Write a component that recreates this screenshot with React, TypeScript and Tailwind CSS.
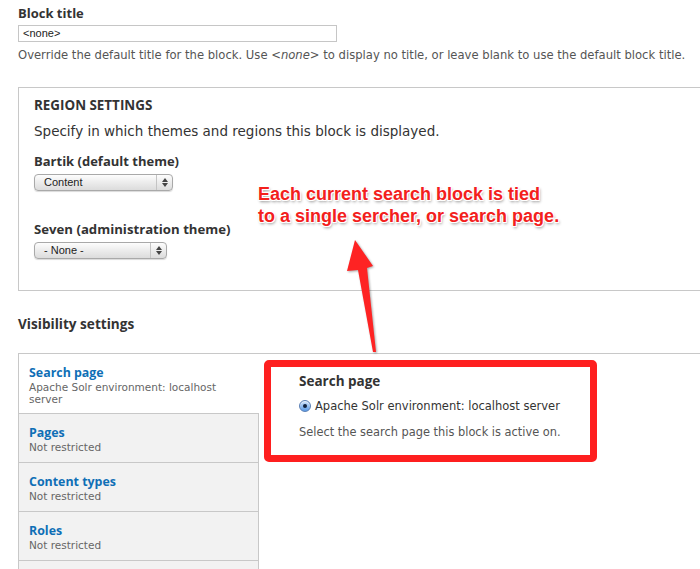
import React from "react";

const font = "font-['Lucida_Grande','DejaVu_Sans',Verdana,sans-serif]";
const bold = "font-['Open_Sans','Lucida_Grande',sans-serif] font-bold";

function AquaSelect({ value, width }: { value: string; width: string }) {
  return (
    <div
      className={`relative flex h-[17px] ${width} items-center rounded-[4px] border border-[#a9a9a9] bg-gradient-to-b from-[#fdfdfd] via-[#ececec] to-[#dcdcdc] shadow-[0_1px_1px_rgba(0,0,0,0.15)]`}
    >
      <span className="flex-1 pl-[9px] font-['Liberation_Sans',Arial,sans-serif] text-[11px] leading-none text-[#222]">
        {value}
      </span>
      <span className="flex h-full w-[16px] flex-col items-center justify-center gap-[1px] border-l border-[#c4c4c4]">
        <svg width="6" height="4" viewBox="0 0 6 4">
          <path d="M3 0 L6 4 L0 4 Z" fill="#444" />
        </svg>
        <svg width="6" height="4" viewBox="0 0 6 4">
          <path d="M0 0 L6 0 L3 4 Z" fill="#444" />
        </svg>
      </span>
    </div>
  );
}

function Tab({
  title,
  summary,
  active,
}: {
  title: string;
  summary: string;
  active?: boolean;
}) {
  return (
    <div
      className={`border-b border-[#c8c8c8] px-[10px] pt-[10px] ${
        active ? "h-[60px] bg-white" : "h-[49px] border-r bg-[#f2f2f2]"
      }`}
    >
      <div className={`${bold} text-[12.4px] leading-[17px] text-[#0f6fb6]`}>{title}</div>
      <div className="pr-[30px] text-[10.5px] leading-[12px] text-[#666]">{summary}</div>
    </div>
  );
}

export default function App() {
  return (
    <div className={`relative h-[569px] w-[700px] overflow-hidden bg-white ${font} text-[#333]`}>
      <div className="pl-[18px] pt-[5px]">
        {/* block title */}
        <label className={`block ${bold} text-[13px] leading-[16px]`}>Block title</label>
        <div className="mt-[4px] flex h-[17px] w-[319px] items-center border border-[#c6c6c6] pl-[4px] font-['Liberation_Sans',Arial,sans-serif] text-[11px] text-[#222]">
          &lt;none&gt;
        </div>
        <p className="mt-[6px] text-[11.6px] leading-[15px] text-[#555]">
          Override the default title for the block. Use <em>&lt;none&gt;</em> to display no title, or
          leave blank to use the default block title.
        </p>

        {/* region settings */}
        <fieldset className="mt-[24px] h-[204px] w-[720px] border border-[#c8c8c8] pl-[15px] pt-[9px]">
          <h2 className={`${bold} text-[13.4px] leading-[16px] uppercase`}>Region settings</h2>
          <p className="mt-[10px] text-[13.5px] leading-[16px]">
            Specify in which themes and regions this block is displayed.
          </p>
          <label className={`mt-[14px] block ${bold} text-[13px] leading-[16px]`}>
            Bartik (default theme)
          </label>
          <div className="mt-[5px]">
            <AquaSelect value="Content" width="w-[139px]" />
          </div>
          <label className={`mt-[30px] block ${bold} text-[13.2px] leading-[16px]`}>
            Seven (administration theme)
          </label>
          <div className="mt-[5px]">
            <AquaSelect value="- None -" width="w-[133px]" />
          </div>
        </fieldset>

        {/* visibility */}
        <h2 className={`mt-[25px] ${bold} text-[13.6px] leading-[16px]`}>Visibility settings</h2>
        <div className="mt-[21px] flex w-[720px] border-t border-l border-[#c8c8c8]">
          <div className="w-[240px] shrink-0">
            <Tab title="Search page" summary="Apache Solr environment: localhost server" active />
            <Tab title="Pages" summary="Not restricted" />
            <Tab title="Content types" summary="Not restricted" />
            <Tab title="Roles" summary="Not restricted" />
            <div className="h-[49px] border-r border-[#c8c8c8] bg-[#f2f2f2]" />
          </div>
          <div className="flex-1 pl-[40px] pt-[19px]">
            <div className={`${bold} text-[13.5px] leading-[16px]`}>Search page</div>
            <label className="mt-[9px] flex items-center gap-[4px] text-[11.5px] leading-[16px]">
              <span className="flex h-[12px] w-[12px] items-center justify-center rounded-full border border-[#5a7fb5] bg-gradient-to-b from-[#cfe3fb] to-[#5b9be6] shadow-[inset_0_1px_1px_rgba(255,255,255,0.7)]">
                <span className="h-[4px] w-[4px] rounded-full bg-[#10213d]" />
              </span>
              Apache Solr environment: localhost server
            </label>
            <p className="mt-[11px] text-[11.4px] leading-[15px] text-[#555]">
              Select the search page this block is active on.
            </p>
          </div>
        </div>
      </div>

      {/* callout frame around the search page pane */}
      <div className="absolute top-[360px] left-[264px] h-[102px] w-[333px] rounded-[5px] border-[7px] border-[#fe1f1f]" />

      {/* callout arrow */}
      <svg className="absolute top-[236px] left-[340px]" width="44" height="122" viewBox="0 0 44 122">
        <path
          d="M15 4 L33 30 L27 32 L36 116 L33 116 L18 34 L7 35 Z"
          fill="#fe2323"
          style={{ filter: "drop-shadow(1px 1px 1px rgba(0,0,0,0.35))" }}
        />
      </svg>

      {/* callout note */}
      <div className="absolute top-[183px] left-[258px] font-['Liberation_Sans',Arial,sans-serif] text-[18px] leading-[22px] font-bold text-[#f3201c] [text-shadow:-1px_-1px_0_#fff,1px_-1px_0_#fff,-1px_1px_0_#fff,1px_1px_0_#fff,1px_2px_3px_rgba(0,0,0,0.45)]">
        Each current search block is tied
        <br />
        to a single sercher, or search page.
      </div>
    </div>
  );
}
